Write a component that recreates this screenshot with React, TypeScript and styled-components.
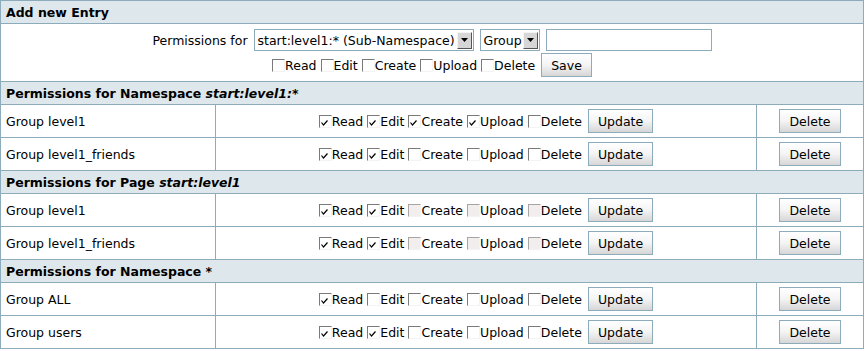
import styled, { createGlobalStyle } from "styled-components";

const GlobalStyle = createGlobalStyle`
  body {
    margin: 0;
    background: #fff;
    font-family: "DejaVu Sans", "Noto Sans", sans-serif;
    font-size: 12.5px;
    color: #000;
  }
`;

const Table = styled.table`
  width: 864px;
  border-collapse: collapse;
  border: 1px solid #8cacbb;
`;
const HeadCell = styled.th`
  background: #dee7ec;
  border: 1px solid #8cacbb;
  text-align: left;
  font-weight: bold;
  height: 22px;
  padding: 0 5px;
  em {
    font-style: italic;
  }
`;
const Cell = styled.td<{ $center?: boolean; $width?: number }>`
  border: 1px solid #8cacbb;
  height: 32px;
  padding: 0 5px;
  vertical-align: middle;
  text-align: ${(p) => (p.$center ? "center" : "left")};
  width: ${(p) => (p.$width ? `${p.$width}px` : "auto")};
`;
const AddCell = styled.td`
  border: 1px solid #8cacbb;
  padding: 5px 5px 4px;
  text-align: center;
`;
const Line = styled.div`
  display: flex;
  justify-content: center;
  align-items: center;
  gap: 6px;
  & + & {
    margin-top: 2px;
  }
`;
const Perms = styled.div`
  display: inline-flex;
  align-items: center;
  gap: 4px;
`;
const Item = styled.label`
  display: inline-flex;
  align-items: center;
  color: #000;
`;
const Box = styled.span<{ $disabled?: boolean }>`
  width: 13px;
  height: 13px;
  box-sizing: border-box;
  border-top: 1px solid ${(p) => (p.$disabled ? "#a8a4a4" : "#7a7a7a")};
  border-left: 1px solid ${(p) => (p.$disabled ? "#a8a4a4" : "#7a7a7a")};
  border-right: 1px solid #f4f2f2;
  border-bottom: 1px solid #f4f2f2;
  background: ${(p) => (p.$disabled ? "#f2eeee" : "#fff")};
  display: inline-flex;
  align-items: flex-end;
  padding: 0 0 1px 1px;
  margin-top: 1px;
`;
const Button = styled.button`
  font-family: inherit;
  font-size: 12.5px;
  height: 24px;
  padding: 0 9px;
  border: 1px solid #8cacbb;
  background: linear-gradient(#ffffff, #f4f4f4 50%, #d6d6d6);
  color: #000;
`;
const Select = styled.div<{ $width: number }>`
  width: ${(p) => p.$width}px;
  height: 22px;
  box-sizing: border-box;
  border: 1px solid #8cacbb;
  background: #fff;
  display: flex;
  align-items: center;
  justify-content: space-between;
  padding: 0 1px 0 3px;
`;
const Arrow = styled.span`
  width: 15px;
  height: 17px;
  box-sizing: border-box;
  background: #d6d6d6;
  border-top: 1px solid #f4f4f4;
  border-left: 1px solid #f4f4f4;
  border-right: 1px solid #555;
  border-bottom: 1px solid #555;
  display: flex;
  align-items: center;
  justify-content: center;
`;
const TextInput = styled.input`
  width: 166px;
  height: 22px;
  box-sizing: border-box;
  border: 1px solid #8cacbb;
  font-family: inherit;
`;

const LABELS = ["Read", "Edit", "Create", "Upload", "Delete"];

type Row = { name: string; perms: number[] };
const SECTIONS: { title: string; em?: string; disabled: number[]; rows: Row[] }[] = [
  {
    title: "Permissions for Namespace ",
    em: "start:level1:*",
    disabled: [],
    rows: [
      { name: "Group level1", perms: [1, 1, 1, 1, 0] },
      { name: "Group level1_friends", perms: [1, 1, 0, 0, 0] },
    ],
  },
  {
    title: "Permissions for Page ",
    em: "start:level1",
    disabled: [2, 3, 4],
    rows: [
      { name: "Group level1", perms: [1, 1, 0, 0, 0] },
      { name: "Group level1_friends", perms: [1, 1, 0, 0, 0] },
    ],
  },
  {
    title: "Permissions for Namespace *",
    disabled: [],
    rows: [
      { name: "Group ALL", perms: [1, 0, 0, 0, 0] },
      { name: "Group users", perms: [1, 1, 0, 0, 0] },
    ],
  },
];

function Check({ on, disabled }: { on: boolean; disabled?: boolean }) {
  return (
    <Box $disabled={disabled}>
      {on && (
        <svg width="7" height="6" viewBox="0 0 7 6">
          <path d="M0.5 2.5 L2.5 5 L6.5 0.5" fill="none" stroke="#000" strokeWidth="1.2" />
        </svg>
      )}
    </Box>
  );
}

function PermList({ perms, disabled = [] }: { perms: number[]; disabled?: number[] }) {
  return (
    <Perms>
      {LABELS.map((l, i) => (
        <Item key={l}>
          <Check on={perms[i] === 1} disabled={disabled.includes(i)} />
          {l}
        </Item>
      ))}
    </Perms>
  );
}

function DropArrow() {
  return (
    <Arrow>
      <svg width="7" height="4" viewBox="0 0 7 4">
        <path d="M0 0 H7 L3.5 4 Z" fill="#000" />
      </svg>
    </Arrow>
  );
}

export default function App() {
  return (
    <>
      <GlobalStyle />
      <Table>
        <tbody>
          <tr>
            <HeadCell colSpan={3}>Add new Entry</HeadCell>
          </tr>
          <tr>
            <AddCell colSpan={3}>
              <Line>
                <span>Permissions for</span>
                <Select $width={220}>
                  start:level1:* (Sub-Namespace)
                  <DropArrow />
                </Select>
                <Select $width={60}>
                  Group
                  <DropArrow />
                </Select>
                <TextInput type="text" />
              </Line>
              <Line>
                <PermList perms={[0, 0, 0, 0, 0]} />
                <Button>Save</Button>
              </Line>
            </AddCell>
          </tr>
          {SECTIONS.map((s) => (
            <>
              <tr key={s.title + s.em}>
                <HeadCell colSpan={3}>
                  {s.title}
                  {s.em && <em>{s.em}</em>}
                </HeadCell>
              </tr>
              {s.rows.map((r) => (
                <tr key={s.title + r.name}>
                  <Cell $width={204}>{r.name}</Cell>
                  <Cell $center>
                    <Line>
                      <PermList perms={r.perms} disabled={s.disabled} />
                      <Button>Update</Button>
                    </Line>
                  </Cell>
                  <Cell $center $width={96}>
                    <Button>Delete</Button>
                  </Cell>
                </tr>
              ))}
            </>
          ))}
        </tbody>
      </Table>
    </>
  );
}
